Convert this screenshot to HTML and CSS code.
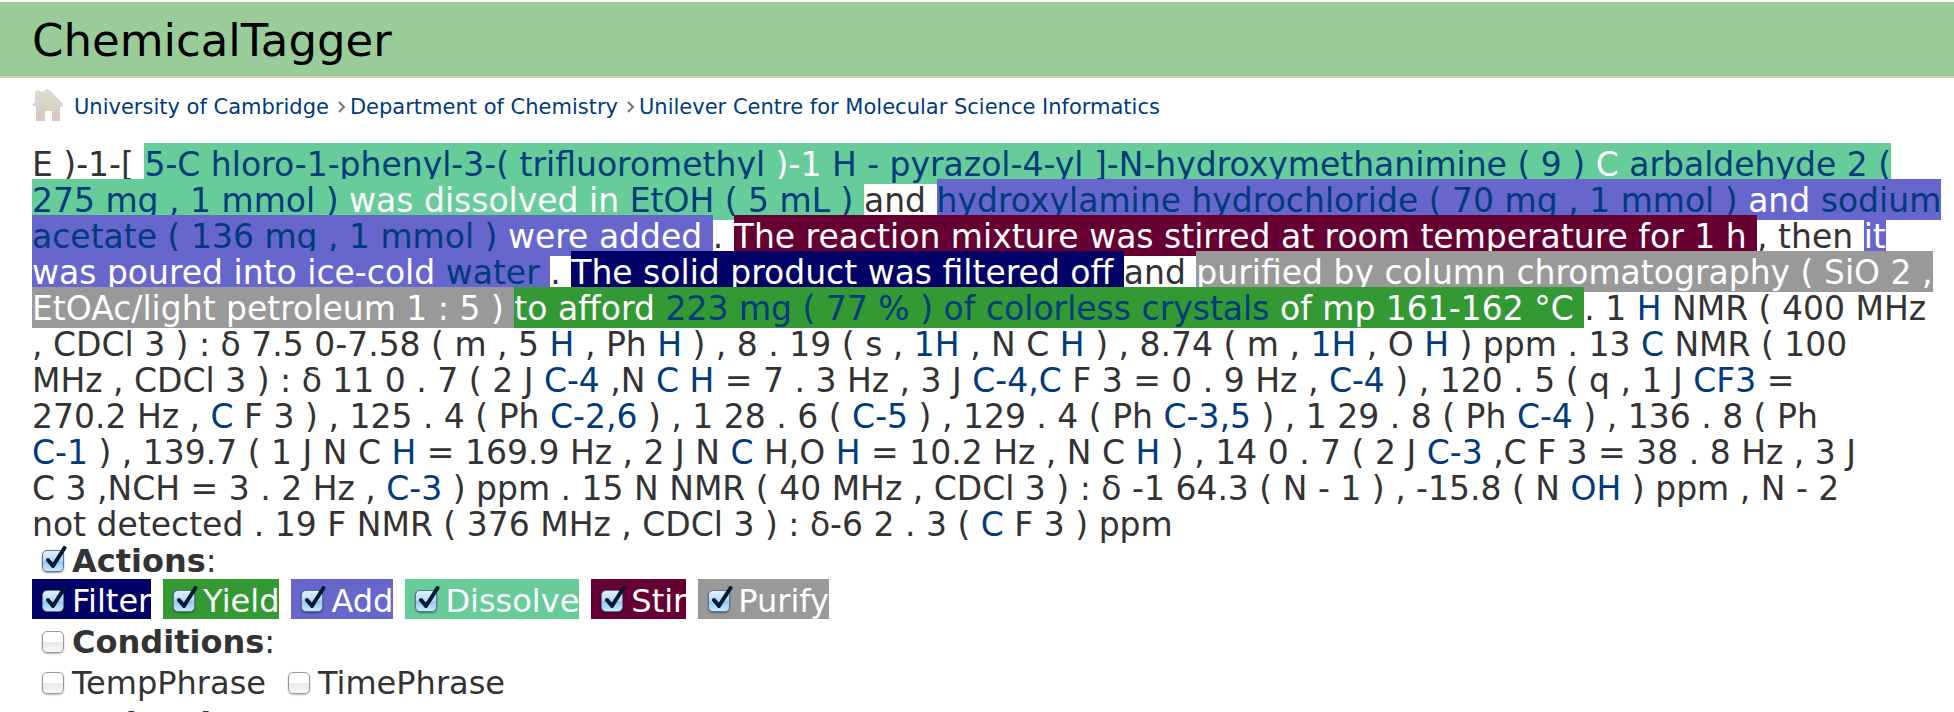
FILE: index.html
```html
<!DOCTYPE html>
<html lang="en">
<head>
<meta charset="utf-8">
<title>ChemicalTagger</title>
<link rel="stylesheet" href="styles.css">
</head>
<body>
<header class="banner"><h1>ChemicalTagger</h1></header>
<nav class="crumbs" aria-label="Breadcrumb">
<a href="#" class="home" aria-label="Home"><svg viewBox="0 0 32 32"><defs><linearGradient id="stone" x2="0" y2="1"><stop offset="0" stop-color="#dfdccd"/><stop offset="1" stop-color="#d5c8c0"/></linearGradient></defs><path fill="url(#stone)" d="M3 3l3-2 4 2 5-3 5 3 8 9 3 3-1 3h-2v14h-8V22h-7v10H4V18l-4-2 3-3z"/></svg></a>
<a href="#">University of Cambridge</a><svg class="sep" viewBox="0 0 8 12"><path d="M1 1l5 5-5 5"/></svg>
<a href="#">Department of Chemistry</a><svg class="sep" viewBox="0 0 8 12"><path d="M1 1l5 5-5 5"/></svg>
<a href="#">Unilever Centre for Molecular Science Informatics</a>
</nav>
<main>
<p class="tagged">E )-1-[ <span class="dissolve"><b>5-C hloro-1-phenyl-3-( trifluoromethyl</b> )-1 <b>H - pyrazol-4-yl ]-N-hydroxymethanimine ( 9 )</b> C <b>arbaldehyde 2 (<br>275 mg , 1 mmol )</b> was dissolved in <b>EtOH ( 5 mL )</b> </span>and <span class="add"><b>hydroxylamine hydrochloride ( 70 mg , 1 mmol )</b> and <b>sodium<br>acetate ( 136 mg , 1 mmol )</b> were added </span>. <span class="stir">The reaction mixture was stirred at room temperature for 1 h </span>, then <span class="add">it<br>was poured into ice-cold <b>water</b> </span>. <span class="filter">The solid product was filtered off </span>and <span class="purify">purified by column chromatography ( SiO 2 ,<br>EtOAc/light petroleum 1 : 5 ) </span><span class="yield">to afford <b>223 mg ( 77 % ) of colorless crystals</b> of mp 161-162 °C </span>. 1 <b>H</b> NMR ( 400 MHz<br>
, CDCl 3 ) : δ 7.5 0-7.58 ( m , 5 <b>H</b> , Ph <b>H</b> ) , 8 . 19 ( s , <b>1H</b> , N C <b>H</b> ) , 8.74 ( m , <b>1H</b> , O <b>H</b> ) ppm . 13 <b>C</b> NMR ( 100<br>
MHz , CDCl 3 ) : δ 11 0 . 7 ( 2 J <b>C-4</b> ,N <b>C</b> <b>H</b> = 7 . 3 Hz , 3 J <b>C-4,C</b> F 3 = 0 . 9 Hz , <b>C-4</b> ) , 120 . 5 ( q , 1 J <b>CF3</b> =<br>
270.2 Hz , <b>C</b> F 3 ) , 125 . 4 ( Ph <b>C-2,6</b> ) , 1 28 . 6 ( <b>C-5</b> ) , 129 . 4 ( Ph <b>C-3,5</b> ) , 1 29 . 8 ( Ph <b>C-4</b> ) , 136 . 8 ( Ph<br>
<b>C-1</b> ) , 139.7 ( 1 J N C <b>H</b> = 169.9 Hz , 2 J N <b>C</b> H,O <b>H</b> = 10.2 Hz , N C <b>H</b> ) , 14 0 . 7 ( 2 J <b>C-3</b> ,C F 3 = 38 . 8 Hz , 3 J<br>
C 3 ,NCH = 3 . 2 Hz , <b>C-3</b> ) ppm . 15 N NMR ( 40 MHz , CDCl 3 ) : δ -1 64.3 ( N - 1 ) , -15.8 ( N <b>OH</b> ) ppm , N - 2<br>
not detected . 19 F NMR ( 376 MHz , CDCl 3 ) : δ-6 2 . 3 ( <b>C</b> F 3 ) ppm</p>
<form>
<div class="row heading"><label><input type="checkbox" checked><span><strong>Actions</strong>:</span></label></div>
<div class="row">
<label class="filter"><input type="checkbox" checked>Filter</label>
<label class="yield"><input type="checkbox" checked>Yield</label>
<label class="add"><input type="checkbox" checked>Add</label>
<label class="dissolve"><input type="checkbox" checked>Dissolve</label>
<label class="stir"><input type="checkbox" checked>Stir</label>
<label class="purify"><input type="checkbox" checked>Purify</label>
</div>
<div class="row"><label><input type="checkbox"><span><strong>Conditions</strong>:</span></label></div>
<div class="row"><label><input type="checkbox">TempPhrase</label> <label><input type="checkbox">TimePhrase</label></div>
<div class="row"><label><input type="checkbox"><span><strong>Molecules</strong>:</span></label></div>
</form>
</main>
</body>
</html>
```
FILE: styles.css
```css
body {
  margin: 0;
  padding-top: 2px;
  height: 100vh;
  box-sizing: border-box;
  overflow: hidden;
  background: #fff;
  color: #333;
  font: 33px/36px Verdana, "DejaVu Sans", sans-serif;
}
.banner {
  background: #9c9;
  border-bottom: 2px solid #d9cfb4;
  padding: 14px 32px 10px;
}
.banner h1 {
  margin: 0;
  color: #000;
  font-size: 45px;
  line-height: 50px;
  font-weight: normal;
}
.crumbs {
  display: flex;
  align-items: center;
  padding: 11px 32px 0;
  font-size: 21px;
  line-height: 36px;
}
.crumbs a { color: #003b7b; text-decoration: none; }
.home { margin-right: 10px; }
.home svg { display: block; width: 32px; height: 32px; margin-bottom: 4px; }
.sep {
  width: 8px;
  height: 12px;
  margin: 0 4px 0 9px;
  fill: none;
  stroke: #777;
  stroke-width: 2;
}
main { padding: 22px 32px 0; white-space: nowrap; }
.tagged { margin: 0; }
.tagged b { color: #003b7b; font-weight: normal; }
.tagged span { padding-top: 2px; }
.filter, .yield, .add, .dissolve, .stir, .purify { color: #fff; }
.filter { background: #006; }
.yield { background: #393; }
.add { background: #66c; }
.dissolve { background: #6c9; }
.stir { background: #603; }
.purify { background: #999; }
form { font-size: 32px; }
.row {
  display: flex;
  gap: 12px;
  padding-bottom: 1px;
}
.row label {
  display: flex;
  align-items: baseline;
  padding: 5px 0 0 10px;
  line-height: 35px;
}
.heading { padding-bottom: 0; }
.heading label { padding-top: 0; line-height: 36px; }
.row input {
  appearance: none;
  position: relative;
  flex: none;
  box-sizing: border-box;
  width: 22px;
  height: 22px;
  margin: 0 8px -4px 0;
  border: 1px solid #999;
  border-radius: 5px;
  background: linear-gradient(#fff 50%, #e8e8e8 51%, #f8f8f8);
  box-shadow: 0 1px 2px #0004;
}
.row input:checked {
  border-color: #5f7396;
  background: linear-gradient(#e3f1fd, #b5d8f8 50%, #8fc4f5 51%, #c8ecff);
  box-shadow: 0 1px 2px #0006;
}
.row input:checked::after {
  content: "";
  position: absolute;
  top: -5px;
  left: 2px;
  width: 22px;
  height: 24px;
  background: url("data:image/svg+xml,%3Csvg xmlns='http://www.w3.org/2000/svg' viewBox='0 0 22 24'%3E%3Cpath d='M3 14l5 6L19.500 2' fill='none' stroke='%23001a33' stroke-width='4' stroke-linecap='round' stroke-linejoin='round'/%3E%3C/svg%3E");
}
```
